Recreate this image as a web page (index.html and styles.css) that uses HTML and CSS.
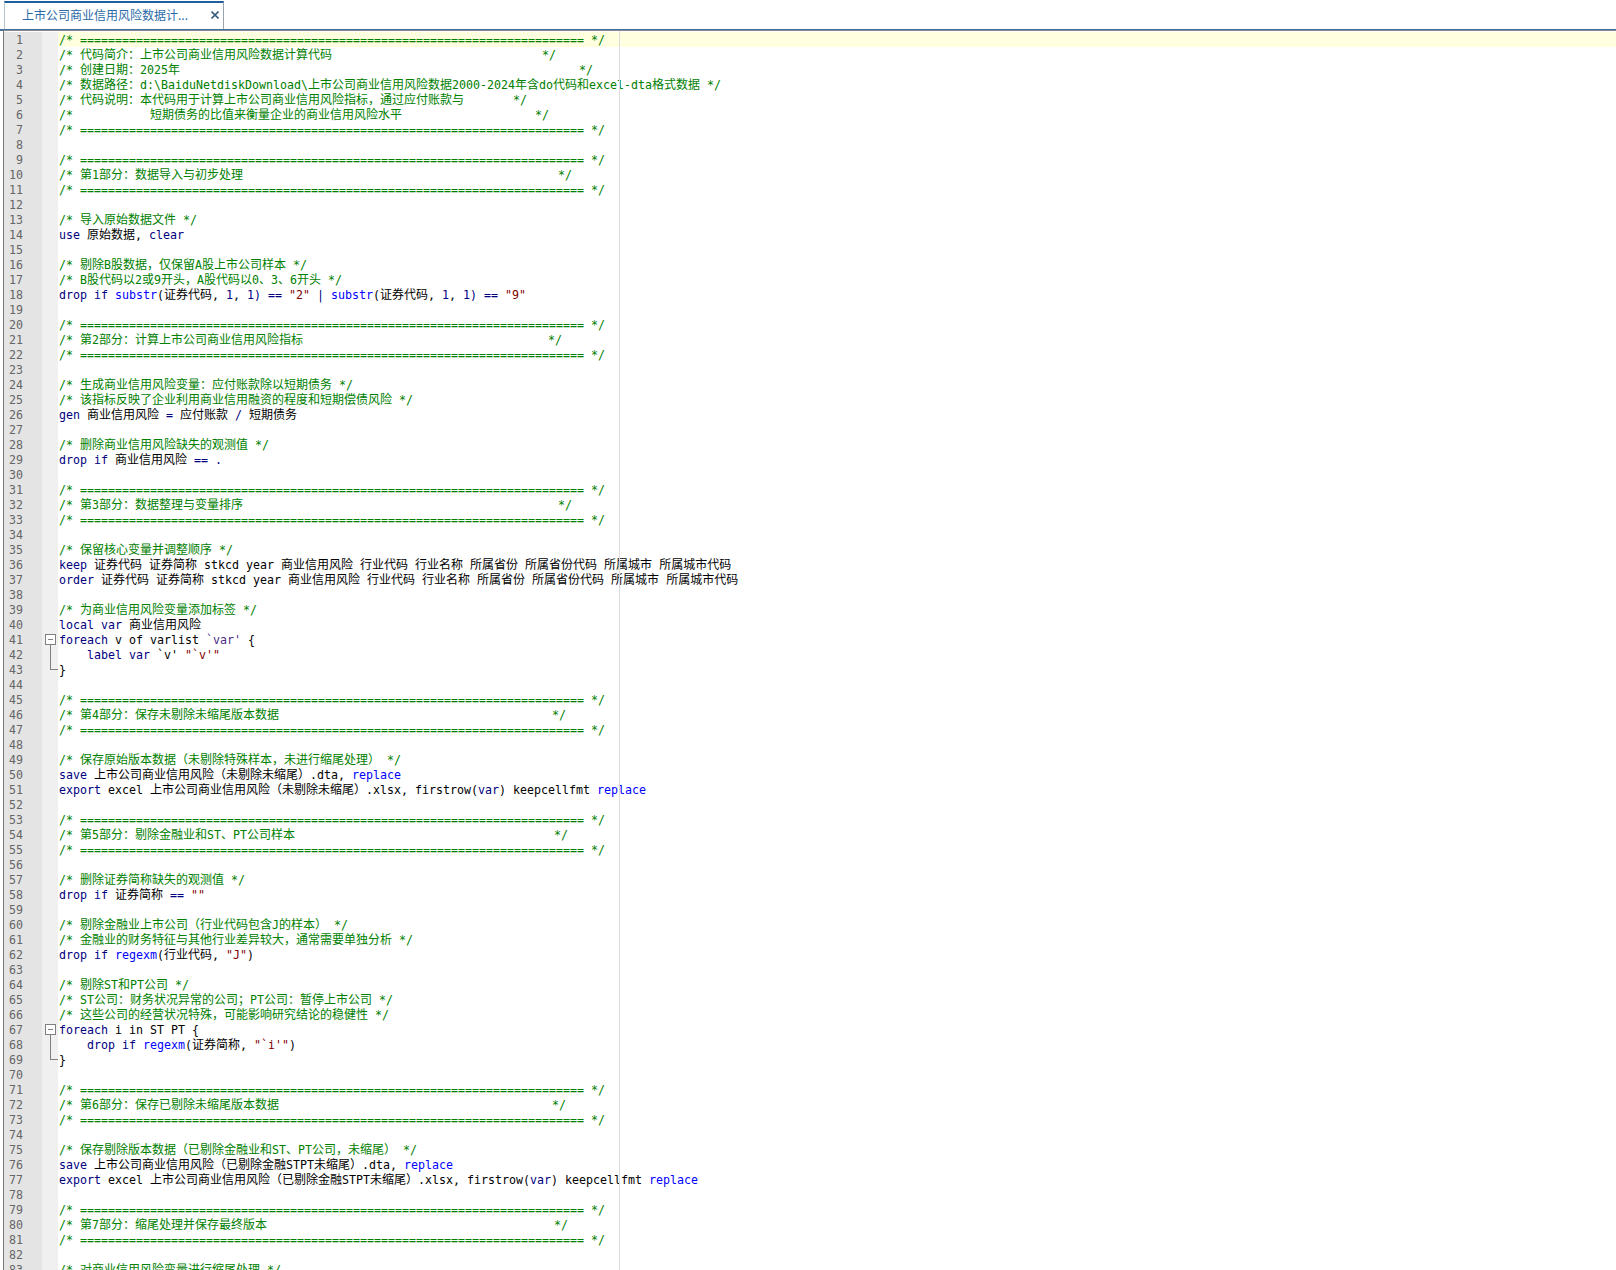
FILE: index.html
```html
<!DOCTYPE html>
<html lang="zh-CN">
<head>
<meta charset="utf-8">
<title>Editor</title>
<link rel="stylesheet" href="styles.css">
</head>
<body>
<header class="tabbar">
  <div class="tab">
    <span class="tab-title">上市公司商业信用风险数据计...</span>
    <svg class="tab-close" width="8" height="8" viewBox="0 0 8 8"><path d="M0.5 0.5L7.5 7.5M7.5 0.5L0.5 7.5"/></svg>
  </div>
</header>
<main class="editor">
<div class="line current"><span class="num">1</span><span class="fold"></span><span class="code c">/* ======================================================================== */</span></div>
<div class="line"><span class="num">2</span><span class="fold"></span><span class="code c">/* <span class="z">代码简介：上市公司商业信用风险数据计算代码</span>                              */</span></div>
<div class="line"><span class="num">3</span><span class="fold"></span><span class="code c">/* <span class="z">创建日期：</span>2025<span class="z">年</span>                                                         */</span></div>
<div class="line"><span class="num">4</span><span class="fold"></span><span class="code c">/* <span class="z">数据路径：</span>d:\BaiduNetdiskDownload\<span class="z">上市公司商业信用风险数据</span>2000-2024<span class="z">年含</span>do<span class="z">代码和</span>excel-dta<span class="z">格式数据</span> */</span></div>
<div class="line"><span class="num">5</span><span class="fold"></span><span class="code c">/* <span class="z">代码说明：本代码用于计算上市公司商业信用风险指标，通过应付账款与</span>       */</span></div>
<div class="line"><span class="num">6</span><span class="fold"></span><span class="code c">/*           <span class="z">短期债务的比值来衡量企业的商业信用风险水平</span>                   */</span></div>
<div class="line"><span class="num">7</span><span class="fold"></span><span class="code c">/* ======================================================================== */</span></div>
<div class="line"><span class="num">8</span><span class="fold"></span><span class="code"></span></div>
<div class="line"><span class="num">9</span><span class="fold"></span><span class="code c">/* ======================================================================== */</span></div>
<div class="line"><span class="num">10</span><span class="fold"></span><span class="code c">/* <span class="z">第</span>1<span class="z">部分：数据导入与初步处理</span>                                             */</span></div>
<div class="line"><span class="num">11</span><span class="fold"></span><span class="code c">/* ======================================================================== */</span></div>
<div class="line"><span class="num">12</span><span class="fold"></span><span class="code"></span></div>
<div class="line"><span class="num">13</span><span class="fold"></span><span class="code c">/* <span class="z">导入原始数据文件</span> */</span></div>
<div class="line"><span class="num">14</span><span class="fold"></span><span class="code"><span class="k">use</span> <span class="z">原始数据</span>, <span class="k">clear</span></span></div>
<div class="line"><span class="num">15</span><span class="fold"></span><span class="code"></span></div>
<div class="line"><span class="num">16</span><span class="fold"></span><span class="code c">/* <span class="z">剔除</span>B<span class="z">股数据，仅保留</span>A<span class="z">股上市公司样本</span> */</span></div>
<div class="line"><span class="num">17</span><span class="fold"></span><span class="code c">/* B<span class="z">股代码以</span>2<span class="z">或</span>9<span class="z">开头，</span>A<span class="z">股代码以</span>0<span class="z">、</span>3<span class="z">、</span>6<span class="z">开头</span> */</span></div>
<div class="line"><span class="num">18</span><span class="fold"></span><span class="code"><span class="k">drop if</span> <span class="f">substr</span>(<span class="z">证券代码</span>, <span class="k">1</span>, <span class="k">1)</span> <span class="k">==</span> <span class="s">"2"</span> <span class="k">|</span> <span class="f">substr</span>(<span class="z">证券代码</span>, <span class="k">1</span>, <span class="k">1)</span> <span class="k">==</span> <span class="s">"9"</span></span></div>
<div class="line"><span class="num">19</span><span class="fold"></span><span class="code"></span></div>
<div class="line"><span class="num">20</span><span class="fold"></span><span class="code c">/* ======================================================================== */</span></div>
<div class="line"><span class="num">21</span><span class="fold"></span><span class="code c">/* <span class="z">第</span>2<span class="z">部分：计算上市公司商业信用风险指标</span>                                   */</span></div>
<div class="line"><span class="num">22</span><span class="fold"></span><span class="code c">/* ======================================================================== */</span></div>
<div class="line"><span class="num">23</span><span class="fold"></span><span class="code"></span></div>
<div class="line"><span class="num">24</span><span class="fold"></span><span class="code c">/* <span class="z">生成商业信用风险变量：应付账款除以短期债务</span> */</span></div>
<div class="line"><span class="num">25</span><span class="fold"></span><span class="code c">/* <span class="z">该指标反映了企业利用商业信用融资的程度和短期偿债风险</span> */</span></div>
<div class="line"><span class="num">26</span><span class="fold"></span><span class="code"><span class="k">gen</span> <span class="z">商业信用风险</span> <span class="k">=</span> <span class="z">应付账款</span> <span class="k">/</span> <span class="z">短期债务</span></span></div>
<div class="line"><span class="num">27</span><span class="fold"></span><span class="code"></span></div>
<div class="line"><span class="num">28</span><span class="fold"></span><span class="code c">/* <span class="z">删除商业信用风险缺失的观测值</span> */</span></div>
<div class="line"><span class="num">29</span><span class="fold"></span><span class="code"><span class="k">drop if</span> <span class="z">商业信用风险</span> <span class="k">==</span> <span class="k">.</span></span></div>
<div class="line"><span class="num">30</span><span class="fold"></span><span class="code"></span></div>
<div class="line"><span class="num">31</span><span class="fold"></span><span class="code c">/* ======================================================================== */</span></div>
<div class="line"><span class="num">32</span><span class="fold"></span><span class="code c">/* <span class="z">第</span>3<span class="z">部分：数据整理与变量排序</span>                                             */</span></div>
<div class="line"><span class="num">33</span><span class="fold"></span><span class="code c">/* ======================================================================== */</span></div>
<div class="line"><span class="num">34</span><span class="fold"></span><span class="code"></span></div>
<div class="line"><span class="num">35</span><span class="fold"></span><span class="code c">/* <span class="z">保留核心变量并调整顺序</span> */</span></div>
<div class="line"><span class="num">36</span><span class="fold"></span><span class="code"><span class="k">keep</span> <span class="z">证券代码</span> <span class="z">证券简称</span> stkcd year <span class="z">商业信用风险</span> <span class="z">行业代码</span> <span class="z">行业名称</span> <span class="z">所属省份</span> <span class="z">所属省份代码</span> <span class="z">所属城市</span> <span class="z">所属城市代码</span></span></div>
<div class="line"><span class="num">37</span><span class="fold"></span><span class="code"><span class="k">order</span> <span class="z">证券代码</span> <span class="z">证券简称</span> stkcd year <span class="z">商业信用风险</span> <span class="z">行业代码</span> <span class="z">行业名称</span> <span class="z">所属省份</span> <span class="z">所属省份代码</span> <span class="z">所属城市</span> <span class="z">所属城市代码</span></span></div>
<div class="line"><span class="num">38</span><span class="fold"></span><span class="code"></span></div>
<div class="line"><span class="num">39</span><span class="fold"></span><span class="code c">/* <span class="z">为商业信用风险变量添加标签</span> */</span></div>
<div class="line"><span class="num">40</span><span class="fold"></span><span class="code"><span class="k">local var</span> <span class="z">商业信用风险</span></span></div>
<div class="line"><span class="num">41</span><span class="fold fold-open"></span><span class="code"><span class="k">foreach</span> v of varlist <span class="m">`var'</span> {</span></div>
<div class="line"><span class="num">42</span><span class="fold fold-mid"></span><span class="code">    <span class="k">label var</span> `v' <span class="s">"`v'"</span></span></div>
<div class="line"><span class="num">43</span><span class="fold fold-end"></span><span class="code">}</span></div>
<div class="line"><span class="num">44</span><span class="fold"></span><span class="code"></span></div>
<div class="line"><span class="num">45</span><span class="fold"></span><span class="code c">/* ======================================================================== */</span></div>
<div class="line"><span class="num">46</span><span class="fold"></span><span class="code c">/* <span class="z">第</span>4<span class="z">部分：保存未剔除未缩尾版本数据</span>                                       */</span></div>
<div class="line"><span class="num">47</span><span class="fold"></span><span class="code c">/* ======================================================================== */</span></div>
<div class="line"><span class="num">48</span><span class="fold"></span><span class="code"></span></div>
<div class="line"><span class="num">49</span><span class="fold"></span><span class="code c">/* <span class="z">保存原始版本数据（未剔除特殊样本，未进行缩尾处理）</span> */</span></div>
<div class="line"><span class="num">50</span><span class="fold"></span><span class="code"><span class="k">save</span> <span class="z">上市公司商业信用风险（未剔除未缩尾）</span>.dta, <span class="f">replace</span></span></div>
<div class="line"><span class="num">51</span><span class="fold"></span><span class="code"><span class="k">export</span> excel <span class="z">上市公司商业信用风险（未剔除未缩尾）</span>.xlsx, firstrow(<span class="k">var</span>) keepcellfmt <span class="f">replace</span></span></div>
<div class="line"><span class="num">52</span><span class="fold"></span><span class="code"></span></div>
<div class="line"><span class="num">53</span><span class="fold"></span><span class="code c">/* ======================================================================== */</span></div>
<div class="line"><span class="num">54</span><span class="fold"></span><span class="code c">/* <span class="z">第</span>5<span class="z">部分：剔除金融业和</span>ST<span class="z">、</span>PT<span class="z">公司样本</span>                                     */</span></div>
<div class="line"><span class="num">55</span><span class="fold"></span><span class="code c">/* ======================================================================== */</span></div>
<div class="line"><span class="num">56</span><span class="fold"></span><span class="code"></span></div>
<div class="line"><span class="num">57</span><span class="fold"></span><span class="code c">/* <span class="z">删除证券简称缺失的观测值</span> */</span></div>
<div class="line"><span class="num">58</span><span class="fold"></span><span class="code"><span class="k">drop if</span> <span class="z">证券简称</span> <span class="k">==</span> <span class="s">""</span></span></div>
<div class="line"><span class="num">59</span><span class="fold"></span><span class="code"></span></div>
<div class="line"><span class="num">60</span><span class="fold"></span><span class="code c">/* <span class="z">剔除金融业上市公司（行业代码包含</span>J<span class="z">的样本）</span> */</span></div>
<div class="line"><span class="num">61</span><span class="fold"></span><span class="code c">/* <span class="z">金融业的财务特征与其他行业差异较大，通常需要单独分析</span> */</span></div>
<div class="line"><span class="num">62</span><span class="fold"></span><span class="code"><span class="k">drop if</span> <span class="f">regexm</span>(<span class="z">行业代码</span>, <span class="s">"J"</span>)</span></div>
<div class="line"><span class="num">63</span><span class="fold"></span><span class="code"></span></div>
<div class="line"><span class="num">64</span><span class="fold"></span><span class="code c">/* <span class="z">剔除</span>ST<span class="z">和</span>PT<span class="z">公司</span> */</span></div>
<div class="line"><span class="num">65</span><span class="fold"></span><span class="code c">/* ST<span class="z">公司：财务状况异常的公司；</span>PT<span class="z">公司：暂停上市公司</span> */</span></div>
<div class="line"><span class="num">66</span><span class="fold"></span><span class="code c">/* <span class="z">这些公司的经营状况特殊，可能影响研究结论的稳健性</span> */</span></div>
<div class="line"><span class="num">67</span><span class="fold fold-open"></span><span class="code"><span class="k">foreach</span> i in ST PT {</span></div>
<div class="line"><span class="num">68</span><span class="fold fold-mid"></span><span class="code">    <span class="k">drop if</span> <span class="f">regexm</span>(<span class="z">证券简称</span>, <span class="s">"`i'"</span>)</span></div>
<div class="line"><span class="num">69</span><span class="fold fold-end"></span><span class="code">}</span></div>
<div class="line"><span class="num">70</span><span class="fold"></span><span class="code"></span></div>
<div class="line"><span class="num">71</span><span class="fold"></span><span class="code c">/* ======================================================================== */</span></div>
<div class="line"><span class="num">72</span><span class="fold"></span><span class="code c">/* <span class="z">第</span>6<span class="z">部分：保存已剔除未缩尾版本数据</span>                                       */</span></div>
<div class="line"><span class="num">73</span><span class="fold"></span><span class="code c">/* ======================================================================== */</span></div>
<div class="line"><span class="num">74</span><span class="fold"></span><span class="code"></span></div>
<div class="line"><span class="num">75</span><span class="fold"></span><span class="code c">/* <span class="z">保存剔除版本数据（已剔除金融业和</span>ST<span class="z">、</span>PT<span class="z">公司，未缩尾）</span> */</span></div>
<div class="line"><span class="num">76</span><span class="fold"></span><span class="code"><span class="k">save</span> <span class="z">上市公司商业信用风险（已剔除金融</span>STPT<span class="z">未缩尾）</span>.dta, <span class="f">replace</span></span></div>
<div class="line"><span class="num">77</span><span class="fold"></span><span class="code"><span class="k">export</span> excel <span class="z">上市公司商业信用风险（已剔除金融</span>STPT<span class="z">未缩尾）</span>.xlsx, firstrow(<span class="k">var</span>) keepcellfmt <span class="f">replace</span></span></div>
<div class="line"><span class="num">78</span><span class="fold"></span><span class="code"></span></div>
<div class="line"><span class="num">79</span><span class="fold"></span><span class="code c">/* ======================================================================== */</span></div>
<div class="line"><span class="num">80</span><span class="fold"></span><span class="code c">/* <span class="z">第</span>7<span class="z">部分：缩尾处理并保存最终版本</span>                                         */</span></div>
<div class="line"><span class="num">81</span><span class="fold"></span><span class="code c">/* ======================================================================== */</span></div>
<div class="line"><span class="num">82</span><span class="fold"></span><span class="code"></span></div>
<div class="line"><span class="num">83</span><span class="fold"></span><span class="code c">/* <span class="z">对商业信用风险变量进行缩尾处理</span> */</span></div>
</main>
</body>
</html>
```
FILE: styles.css
```css
html, body {
  margin: 0;
  padding: 0;
  height: 100%;
  background: #fff;
  overflow: hidden;
}
body {
  display: flex;
  flex-direction: column;
  width: 1616px;
  height: 1270px;
}
.tabbar {
  flex: none;
  box-sizing: border-box;
  height: 31px;
  padding: 1px 0 0 4px;
  background: #fff;
  border-bottom: 2px solid #42709c;
  display: flex;
}
.tab {
  box-sizing: border-box;
  width: 220px;
  height: 28px;
  border-top: 2px solid #1f5f9e;
  border-left: 1px solid #b8c4cf;
  border-right: 1px solid #9aa5ad;
  display: flex;
  align-items: center;
  padding: 0 4px 3px 17px;
  justify-content: space-between;
}
.tab-title {
  font: 12px "Noto Sans CJK SC", sans-serif;
  color: #2a6aa8;
  white-space: nowrap;
}
.tab-close {
  fill: none;
  stroke: #3d5f7f;
  stroke-width: 1.6;
}
.editor {
  flex: 1;
  min-height: 0;
  overflow: hidden;
  position: relative;
  box-sizing: border-box;
  margin-left: 3px;
  padding-top: 1px;
  border-left: 1px solid #777;
  border-top: 1px solid #8a8a8a;
  margin-top: -1px;
}
.editor::after {
  content: "";
  position: absolute;
  left: 615px;
  top: 0;
  bottom: 0;
  width: 1px;
  background: #dcdcdc;
}
.line {
  display: flex;
  height: 15px;
  font: 11.63px/17px "DejaVu Sans Mono", monospace;
}
.num {
  flex: none;
  box-sizing: border-box;
  width: 38px;
  padding-right: 19px;
  text-align: right;
  background: #e4e4e4;
  color: #666;
}
.fold {
  flex: none;
  width: 16px;
  position: relative;
  background: #f0f0f0;
}
.fold-open::before {
  content: "";
  position: absolute;
  left: 3px;
  top: 2px;
  width: 9px;
  height: 9px;
  border: 1px solid #808080;
  background: linear-gradient(#808080, #808080) center / 5px 1px no-repeat #fff;
}
.fold-open::after {
  content: "";
  position: absolute;
  left: 8px;
  top: 13px;
  bottom: 0;
  width: 1px;
  background: #808080;
}
.fold-mid::before {
  content: "";
  position: absolute;
  left: 8px;
  top: 0;
  bottom: 0;
  width: 1px;
  background: #808080;
}
.fold-end::before {
  content: "";
  position: absolute;
  left: 8px;
  top: 0;
  width: 7px;
  height: 7px;
  border-left: 1px solid #808080;
  border-bottom: 1px solid #808080;
}
.code {
  flex: 1;
  padding-left: 1px;
  white-space: pre;
  color: #000;
}
.current .code {
  background: #ffffe0;
}
.z {
  font-family: "Noto Sans CJK SC", sans-serif;
  font-size: 12px;
  line-height: 12px;
}
.c { color: #008000; }
.k { color: #00007f; }
.f { color: #0000ff; }
.s { color: #7f0000; }
.m { color: #4b2f86; }
```
